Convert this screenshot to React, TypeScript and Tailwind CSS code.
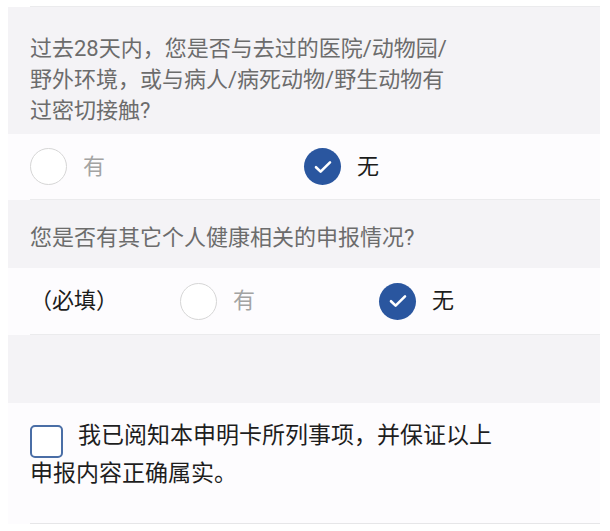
import React from 'react';

const font = { fontFamily: 'Roboto, "Noto Sans CJK SC", "Noto Sans", sans-serif' };

const Radio: React.FC<{ checked?: boolean; label: string }> = ({ checked, label }) => (
  <div className="flex items-center">
    {checked ? (
      <span className="flex h-[37px] w-[37px] items-center justify-center rounded-full bg-[#2a569f]">
        <svg width="18" height="14" viewBox="0 0 18 14" fill="none">
          <path d="M2 7.2l4.6 4.4L16 2.4" stroke="#ffffff" strokeWidth="2.6" strokeLinecap="round" strokeLinejoin="round" />
        </svg>
      </span>
    ) : (
      <span className="h-[37px] w-[37px] rounded-full border-[1.5px] border-[#d6d6d6] bg-white" />
    )}
    <span className={`ml-[16px] text-[22px] leading-none ${checked ? 'text-[#1c1c1c]' : 'text-[#a3a3a3]'}`}>{label}</span>
  </div>
);

export default function App() {
  return (
    <div className="h-[531px] w-[610px] bg-white" style={font}>
      <div className="ml-[8px] w-[592px]">
        {/* end of previous row */}
        <div className="h-[7px] bg-white pl-[22px]">
          <div className="h-full border-b border-[#ebebed]" />
        </div>

        {/* question 1 */}
        <div className="bg-[#f4f3f6] px-[22px] pt-[26px] pb-[8px] text-[22px] leading-[31px] text-[#6c6c6c]">
          过去28天内，您是否与去过的医院/动物园/
          <br />
          野外环境，或与病人/病死动物/野生动物有
          <br />
          过密切接触?
        </div>

        <div className="bg-[#fdfcfe] pl-[22px]">
          <div className="grid h-[66px] grid-cols-2 items-center border-b border-[#ebebed] pr-[22px]">
            <Radio label="有" />
            <Radio checked label="无" />
          </div>
        </div>

        {/* question 2 */}
        <div className="bg-[#f4f3f6] px-[22px] pt-[22px] pb-[15px] text-[22px] leading-[31px] text-[#6c6c6c]">
          您是否有其它个人健康相关的申报情况?
        </div>

        <div className="bg-[#fdfcfe] pl-[22px]">
          <div className="flex h-[67px] items-center border-b border-[#ebebed] pr-[22px]">
            <span className="w-[150px] text-[22px] leading-none text-[#1c1c1c]">（必填）</span>
            <div className="grid flex-1 grid-cols-2">
              <Radio label="有" />
              <Radio checked label="无" />
            </div>
          </div>
        </div>

        <div className="h-[68px] bg-[#f4f3f6]" />

        {/* agreement */}
        <div className="bg-[#fdfcfe] pl-[22px]">
          <div className="border-b border-[#e6e6e8] pt-[14px] pb-[30px] pr-[22px] text-[23px] leading-[38px] text-[#1e1e1e]">
            <span className="mr-[15px] inline-block h-[33px] w-[33px] translate-y-[8px] rounded-[5px] border-2 border-[#4a6ea6] bg-white align-top" />
            我已阅知本申明卡所列事项，并保证以上
            <br />
            申报内容正确属实。
          </div>
        </div>
      </div>
    </div>
  );
}
